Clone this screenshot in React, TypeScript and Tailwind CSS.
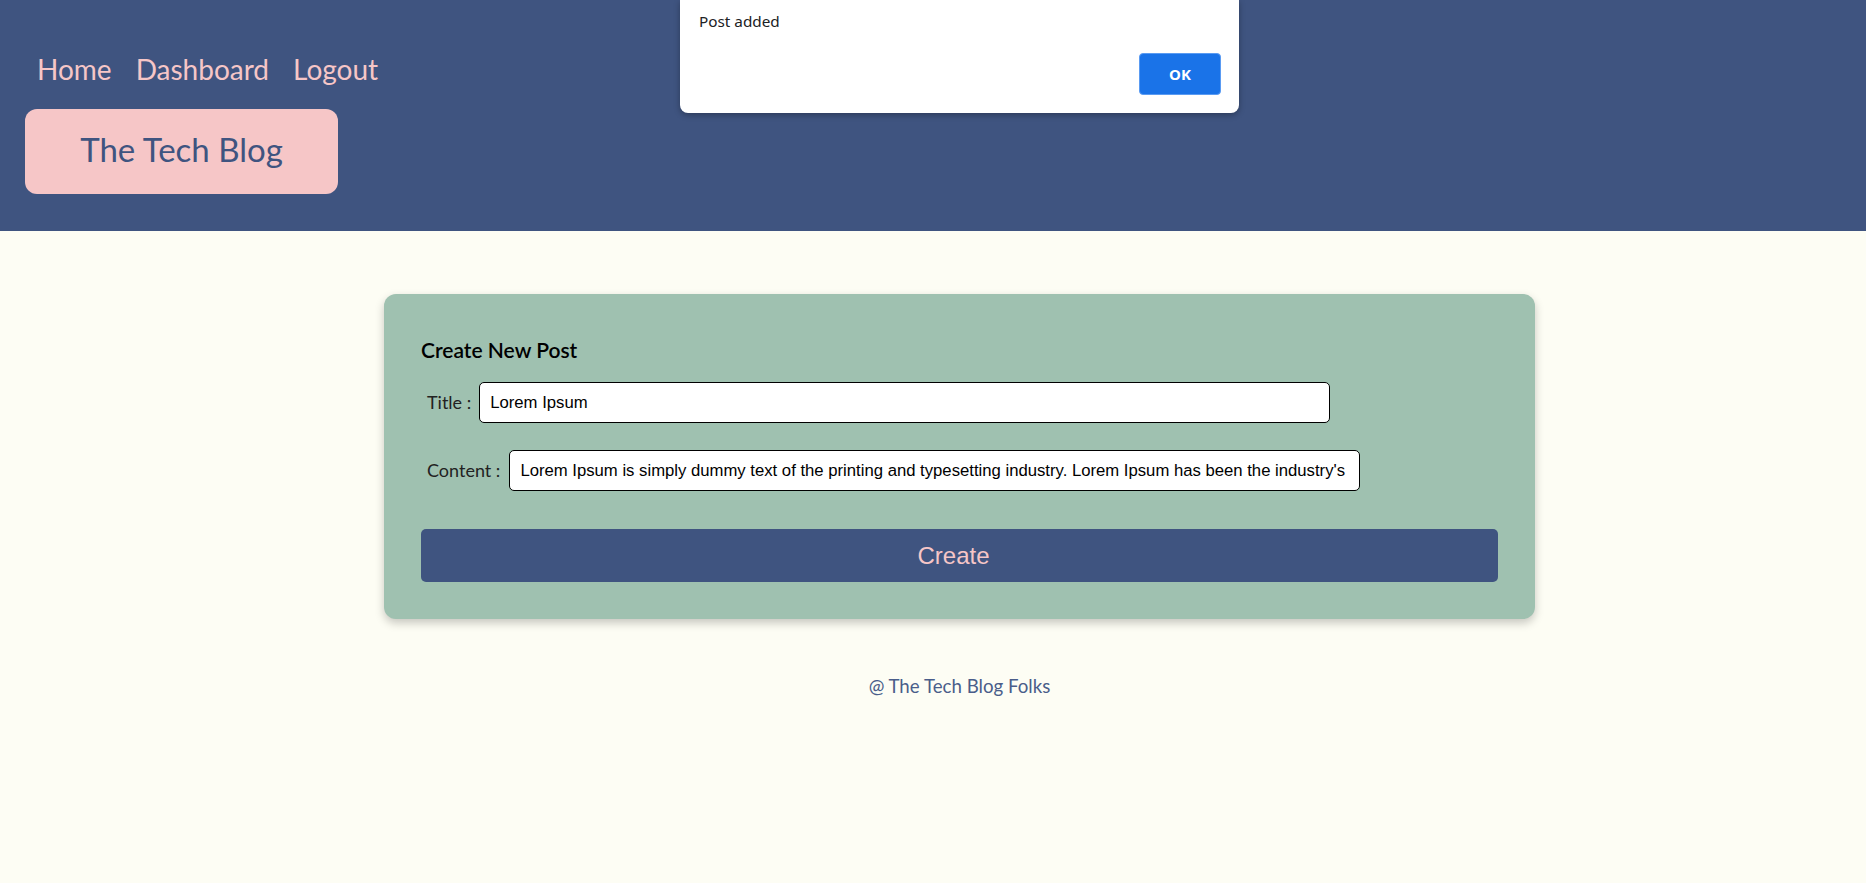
import React from "react";

export default function App() {
  const lato = { fontFamily: "Lato, 'Noto Sans', sans-serif" };
  const arial = { fontFamily: "'Liberation Sans', Arial, sans-serif" };
  return (
    <div className="min-h-screen bg-[#fdfdf4] relative" style={lato}>
      <header className="h-[231px] bg-[#3f5480] px-[25px] pt-[49px]">
        <nav className="flex gap-[24px] pl-[12px] text-[28px] leading-[40px] text-[#f6c6c7]">
          <span>Home</span>
          <span>Dashboard</span>
          <span>Logout</span>
        </nav>
        <div className="mt-[20px] flex h-[85px] w-[313px] items-center justify-center rounded-[12px] bg-[#f6c6c7] pb-[4px]">
          <span className="text-[33px] text-[#3f5480]">The Tech Blog</span>
        </div>
      </header>

      <main className="ml-[384px] w-[1151px]">
        <section className="mt-[63px] rounded-[12px] bg-[#9fc1b0] p-[37px] shadow-[0_4px_10px_rgba(0,0,0,0.22)]">
          <h2 className="text-[21px] font-semibold leading-[38px] text-black">Create New Post</h2>
          <div className="mt-[13px] flex items-center pl-[6px]">
            <label className="text-[18px] text-[#222]">Title :</label>
            <input
              readOnly
              value="Lorem Ipsum"
              className="ml-[8px] h-[41px] w-[851px] rounded-[5px] border border-black bg-white px-[10px] text-[16.7px] text-black outline-none"
              style={arial}
            />
          </div>
          <div className="mt-[27px] flex items-center pl-[6px]">
            <label className="text-[18px] text-[#222]">Content :</label>
            <input
              readOnly
              value="Lorem Ipsum is simply dummy text of the printing and typesetting industry. Lorem Ipsum has been the industry's standard dummy text ever since the 1500s"
              className="ml-[9px] h-[41px] w-[851px] rounded-[5px] border border-black bg-white px-[10px] text-[16.7px] text-black outline-none"
              style={arial}
            />
          </div>
          <button
            className="mt-[38px] h-[53px] w-full rounded-[5px] bg-[#3f5480] pr-[12px] text-[24px] text-[#f6c6c7]"
            style={arial}
          >
            Create
          </button>
        </section>
        <footer className="mt-[53px] text-center text-[18.7px] leading-[28px] text-[#4a5d8a]">
          @ The Tech Blog Folks
        </footer>
      </main>

      <div
        className="absolute left-[680px] top-0 h-[113px] w-[559px] rounded-b-[8px] bg-white shadow-[0_2px_6px_rgba(0,0,0,0.3)]"
        style={{ fontFamily: "'Noto Sans', sans-serif" }}
      >
        <div className="pl-[19px] pt-[12px] text-[15.3px] leading-[18px] text-[#202124]">Post added</div>
        <button className="absolute bottom-[18px] right-[18px] h-[42px] w-[82px] rounded-[4px] border border-[#5a9bf2] bg-[#1a73e8] text-[15px] font-bold text-white">
          OK
        </button>
      </div>
    </div>
  );
}
